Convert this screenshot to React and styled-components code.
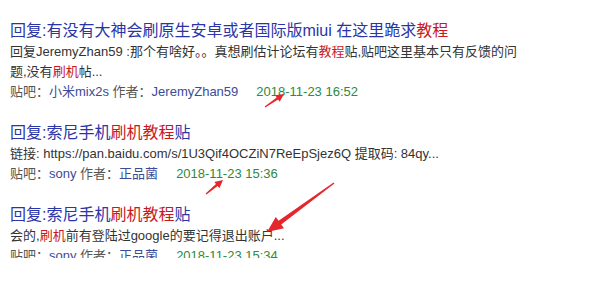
import React from "react";
import styled, { createGlobalStyle } from "styled-components";

const Global = createGlobalStyle`
  html, body { margin: 0; padding: 0; background: #fff; }
  body { font-family: "Liberation Sans", "Noto Sans CJK SC", sans-serif; }
`;

const Page = styled.div`
  position: relative;
  width: 597px;
  height: 258px;
  overflow: hidden;
  padding: 20px 0 0 10px;
  box-sizing: border-box;
  display: flex;
  flex-direction: column;
  gap: 20px;
`;

const Result = styled.div`
  display: flex;
  flex-direction: column;
`;

const Title = styled.div`
  font-size: 16px;
  line-height: 22px;
  color: #2b35a8;
  white-space: nowrap;
`;

const Desc = styled.div`
  font-size: 13px;
  line-height: 20px;
  color: #333;
  width: 520px;
`;

const Em = styled.span`
  color: #c8191e;
`;

const Meta = styled.div`
  font-size: 13px;
  line-height: 20px;
  color: #555;
  white-space: nowrap;
  display: flex;
  align-items: baseline;
`;

const MetaLink = styled.span`
  color: #3c4b99;
`;

const Date = styled.span`
  color: #2f8a3a;
  margin-left: 18px;
`;

const Overlay = styled.svg`
  position: absolute;
  left: 0;
  top: 0;
  pointer-events: none;
`;

function arrowPoints(tx, ty, px, py, h, w, s) {
  const dx = px - tx;
  const dy = py - ty;
  const len = Math.hypot(dx, dy);
  const ux = dx / len;
  const uy = dy / len;
  const nx = -uy;
  const ny = ux;
  const bx = px - ux * h;
  const by = py - uy * h;
  const pts = [
    [tx + nx * 0.6, ty + ny * 0.6],
    [bx + (nx * s) / 2, by + (ny * s) / 2],
    [bx + nx * w, by + ny * w],
    [px, py],
    [bx - nx * w, by - ny * w],
    [bx - (nx * s) / 2, by - (ny * s) / 2],
    [tx - nx * 0.6, ty - ny * 0.6],
  ];
  return pts.map((p) => p.map((v) => v.toFixed(1)).join(",")).join(" ");
}

const arrows = [
  { t: [265, 107], p: [284, 94], h: 8, w: 4, s: 2.6 },
  { t: [206, 194], p: [223, 180], h: 8, w: 4, s: 2.6 },
  { t: [334, 183], p: [267, 232], h: 16, w: 7, s: 4.5 },
];

const results = [
  {
    title: (
      <>
        回复:有没有大神会刷原生安卓或者国际版miui 在这里跪求<Em>教程</Em>
      </>
    ),
    desc: (
      <>
        回复JeremyZhan59 :那个有啥好。。真想刷估计论坛有<Em>教程</Em>贴,贴吧这里基本只有反馈的问题,没有<Em>刷机</Em>帖...
      </>
    ),
    bar: "小米mix2s",
    author: "JeremyZhan59",
    date: "2018-11-23 16:52",
  },
  {
    title: (
      <>
        回复:索尼手机<Em>刷机教程</Em>贴
      </>
    ),
    desc: <>链接: https://pan.baidu.com/s/1U3Qif4OCZiN7ReEpSjez6Q 提取码: 84qy...</>,
    bar: "sony",
    author: "正品菌",
    date: "2018-11-23 15:36",
  },
  {
    title: (
      <>
        回复:索尼手机<Em>刷机教程</Em>贴
      </>
    ),
    desc: (
      <>
        会的,<Em>刷机</Em>前有登陆过google的要记得退出账户...
      </>
    ),
    bar: "sony",
    author: "正品菌",
    date: "2018-11-23 15:34",
  },
];

export default function App() {
  return (
    <>
      <Global />
      <Page>
        {results.map((r, i) => (
          <Result key={i}>
            <Title>{r.title}</Title>
            <Desc>{r.desc}</Desc>
            <Meta>
              <span>
                贴吧：<MetaLink>{r.bar}</MetaLink> 作者：<MetaLink>{r.author}</MetaLink>
              </span>
              <Date>{r.date}</Date>
            </Meta>
          </Result>
        ))}
        <Overlay width="597" height="258" viewBox="0 0 597 258">
          {arrows.map((a, i) => (
            <polygon
              key={i}
              points={arrowPoints(a.t[0], a.t[1], a.p[0], a.p[1], a.h, a.w, a.s)}
              fill="#e5262b"
            />
          ))}
        </Overlay>
      </Page>
    </>
  );
}
